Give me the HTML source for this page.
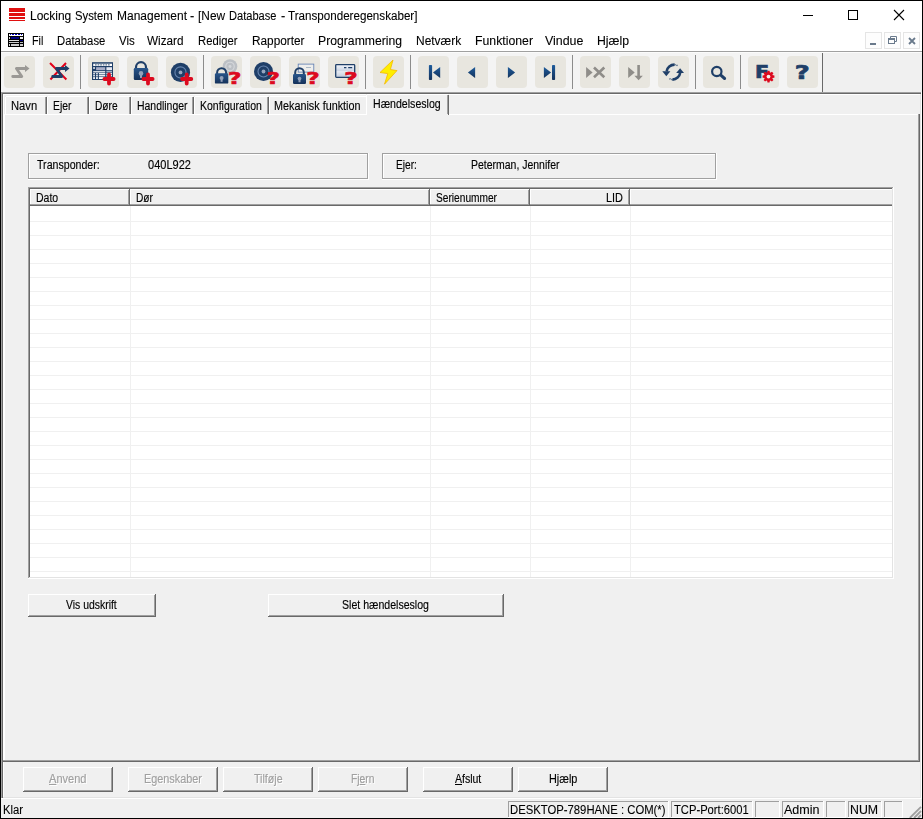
<!DOCTYPE html>
<html lang="da"><head><meta charset="utf-8"><title>Locking System Management</title>
<style>
html,body{margin:0;padding:0;}
body{width:923px;height:819px;overflow:hidden;background:#fff;position:relative;font-family:"Liberation Sans", sans-serif;}
#w{position:absolute;left:0;top:0;width:923px;height:819px;overflow:hidden;background:#fff;}
#w div{position:absolute;}
#w .g{left:0;top:0;width:0;height:0;}
#w svg{position:absolute;overflow:visible;}
.t{position:absolute;white-space:pre;transform-origin:0 0;color:#000;}
.f12{font-size:12px;line-height:16px;-webkit-text-stroke:0.1px;}
.f12_5{font-size:12.5px;line-height:16px;-webkit-text-stroke:0.15px;}
.t u{text-decoration:underline;text-underline-offset:1px;}
</style></head>
<body><div id="w">
<div class="g" id="titlebar">
<div style="left:0px;top:0px;width:923px;height:819px;background:#fff;"></div>
<div style="left:9px;top:8px;width:16px;height:4px;background:#e01010;"></div>
<div style="left:9px;top:13px;width:16px;height:3px;background:#e01010;"></div>
<div style="left:9px;top:17px;width:16px;height:2px;background:#e01010;"></div>
<div style="left:9px;top:20px;width:16px;height:1px;background:#e01010;"></div>
<span class="t f12" style="left:30.06px;top:8.33px;transform:scaleX(0.9978);">Locking </span>
<span class="t f12" style="left:75.19px;top:8.33px;transform:scaleX(0.9402);">System </span>
<span class="t f12" style="left:116.76px;top:8.33px;transform:scaleX(0.9989);">Management </span>
<span class="t f12" style="left:190.23px;top:8.33px;transform:scaleX(1.0588);">- </span>
<span class="t f12" style="left:198.37px;top:8.33px;transform:scaleX(0.9897);">[New </span>
<span class="t f12" style="left:229.40px;top:8.33px;transform:scaleX(0.9227);">Database </span>
<span class="t f12" style="left:280.73px;top:8.33px;transform:scaleX(1.0588);">- </span>
<span class="t f12" style="left:288.48px;top:8.33px;transform:scaleX(0.9686);">Transponderegenskaber]</span>
<div style="left:803px;top:15px;width:10px;height:1px;background:#000;"></div>
<div style="left:848px;top:10px;width:8px;height:8px;border:1px solid #000;"></div>
<svg style="left:893px;top:9px" width="12" height="12" viewBox="0 0 12 12"><path d="M1 1 L11 11 M11 1 L1 11" stroke="#000" stroke-width="1.1" fill="none"/></svg>
</div>
<div class="g" id="menubar">
<svg style="left:8px;top:33px" width="16" height="14" viewBox="0 0 16 14"><rect x="0" y="0" width="16" height="14" fill="#000"/><rect x="1" y="1" width="14" height="2" fill="#fff"/><path d="M2 1h1v1h-1zM4 1h2v1h-2zM7 1h2v1h-2zM10 1h2v1h-2zM13 1h1v1h-1z" fill="#0000c0"/><rect x="1" y="4" width="1" height="2" fill="#ddd"/><rect x="3" y="4" width="8" height="2" fill="#000080"/><rect x="12" y="4" width="3" height="2" fill="#eee"/><rect x="1" y="7" width="10" height="1" fill="#ddd"/><rect x="12" y="7" width="3" height="1" fill="#000080"/><rect x="1" y="9" width="10" height="1" fill="#ccc"/><rect x="12" y="9" width="3" height="1" fill="#bbb"/><rect x="1" y="11" width="1" height="2" fill="#ddd"/><rect x="3" y="11" width="8" height="2" fill="#ccc"/><rect x="12" y="11" width="3" height="2" fill="#ccc"/></svg>
<span class="t f12" style="left:31.52px;top:33.23px;transform:scaleX(0.8972);">Fil</span>
<span class="t f12" style="left:56.89px;top:33.23px;transform:scaleX(0.9405);">Database</span>
<span class="t f12" style="left:118.68px;top:33.23px;transform:scaleX(0.9562);">Vis</span>
<span class="t f12" style="left:147.27px;top:33.23px;transform:scaleX(0.9762);">Wizard</span>
<span class="t f12" style="left:198.39px;top:33.23px;transform:scaleX(0.9377);">Rediger</span>
<span class="t f12" style="left:251.97px;top:33.23px;transform:scaleX(0.9848);">Rapporter</span>
<span class="t f12" style="left:317.95px;top:33.23px;transform:scaleX(1.0169);">Programmering</span>
<span class="t f12" style="left:416.36px;top:33.23px;transform:scaleX(0.9963);">Netværk</span>
<span class="t f12" style="left:474.85px;top:33.23px;transform:scaleX(1.0230);">Funktioner</span>
<span class="t f12" style="left:545.44px;top:33.23px;transform:scaleX(1.0339);">Vindue</span>
<span class="t f12" style="left:597.25px;top:33.23px;transform:scaleX(1.0210);">Hjælp</span>
<div style="left:865px;top:32px;width:17px;height:17px;border:1px solid #e5e5e5;box-sizing:border-box;background:#fdfdfd"></div>
<div style="left:884px;top:32px;width:17px;height:17px;border:1px solid #e5e5e5;box-sizing:border-box;background:#fdfdfd"></div>
<div style="left:903px;top:32px;width:17px;height:17px;border:1px solid #e5e5e5;box-sizing:border-box;background:#fdfdfd"></div>
<div style="left:870px;top:43px;width:6px;height:2px;background:#6a7a8c;"></div>
<svg style="left:888px;top:36px" width="9" height="9" viewBox="0 0 9 9"><path d="M2.5 2.5V0.5H8.5V5.5H6.5" stroke="#6a7a8c" fill="none"/><rect x="0.5" y="2.5" width="6" height="5" stroke="#6a7a8c" fill="#fdfdfd"/><path d="M0.5 3.5H6.5" stroke="#6a7a8c"/></svg>
<svg style="left:908px;top:37px" width="8" height="8" viewBox="0 0 8 8"><path d="M1 1L7 7M7 1L1 7" stroke="#6a7a8c" stroke-width="1.8" fill="none"/></svg>
<div style="left:1px;top:51px;width:921px;height:1px;background:#a0a0a0;"></div>
</div>
<div class="g" id="toolbar">
<div style="left:1px;top:52px;width:921px;height:40px;background:#f0f0f0;"></div>
<div style="left:1px;top:52px;width:821px;height:40px;background:#f4f4f4;"></div>
<div style="left:1px;top:52px;width:921px;height:1px;background:#fbfbfb;"></div>
<div style="left:3.5px;top:56px;width:31.5px;height:32px;background:#e8e6df;border-radius:4px"></div>
<div style="left:42.5px;top:56px;width:31.5px;height:32px;background:#e8e6df;border-radius:4px"></div>
<div style="left:87.5px;top:56px;width:31.5px;height:32px;background:#e8e6df;border-radius:4px"></div>
<div style="left:126.5px;top:56px;width:31.5px;height:32px;background:#e8e6df;border-radius:4px"></div>
<div style="left:165.5px;top:56px;width:31.5px;height:32px;background:#e8e6df;border-radius:4px"></div>
<div style="left:210.5px;top:56px;width:31.5px;height:32px;background:#e8e6df;border-radius:4px"></div>
<div style="left:249.5px;top:56px;width:31.5px;height:32px;background:#e8e6df;border-radius:4px"></div>
<div style="left:288.5px;top:56px;width:31.5px;height:32px;background:#e8e6df;border-radius:4px"></div>
<div style="left:327.5px;top:56px;width:31.5px;height:32px;background:#e8e6df;border-radius:4px"></div>
<div style="left:372.5px;top:56px;width:31.5px;height:32px;background:#e8e6df;border-radius:4px"></div>
<div style="left:417.5px;top:56px;width:31.5px;height:32px;background:#e8e6df;border-radius:4px"></div>
<div style="left:456.5px;top:56px;width:31.5px;height:32px;background:#e8e6df;border-radius:4px"></div>
<div style="left:495.5px;top:56px;width:31.5px;height:32px;background:#e8e6df;border-radius:4px"></div>
<div style="left:534.5px;top:56px;width:31.5px;height:32px;background:#e8e6df;border-radius:4px"></div>
<div style="left:579.5px;top:56px;width:31.5px;height:32px;background:#e8e6df;border-radius:4px"></div>
<div style="left:618.5px;top:56px;width:31.5px;height:32px;background:#e8e6df;border-radius:4px"></div>
<div style="left:657.5px;top:56px;width:31.5px;height:32px;background:#e8e6df;border-radius:4px"></div>
<div style="left:702.5px;top:56px;width:31.5px;height:32px;background:#e8e6df;border-radius:4px"></div>
<div style="left:747.5px;top:56px;width:31.5px;height:32px;background:#e8e6df;border-radius:4px"></div>
<div style="left:786.5px;top:56px;width:31.5px;height:32px;background:#e8e6df;border-radius:4px"></div>
<div style="left:80px;top:55px;width:1px;height:34px;background:#8c8c8c;"></div>
<div style="left:203px;top:55px;width:1px;height:34px;background:#8c8c8c;"></div>
<div style="left:365px;top:55px;width:1px;height:34px;background:#8c8c8c;"></div>
<div style="left:410px;top:55px;width:1px;height:34px;background:#8c8c8c;"></div>
<div style="left:572px;top:55px;width:1px;height:34px;background:#8c8c8c;"></div>
<div style="left:695px;top:55px;width:1px;height:34px;background:#8c8c8c;"></div>
<div style="left:740px;top:55px;width:1px;height:34px;background:#8c8c8c;"></div>
<div style="left:822px;top:53px;width:1px;height:39px;background:#696969;"></div>
<svg style="left:3px;top:56px" width="32" height="32" viewBox="0 0 32 32"><defs><linearGradient id="lg" x1="0" y1="0" x2="0" y2="1"><stop offset="0" stop-color="#28558a"/><stop offset="1" stop-color="#15325a"/></linearGradient></defs><path d="M9.7 20.5H18.8L13.4 12.5H23" stroke="#9b9995" stroke-width="2.8" fill="none" stroke-linecap="round" stroke-linejoin="round"/><path d="M22 9L26.5 12.5L22 16Z" fill="#9b9995"/></svg>
<svg style="left:43.3px;top:56px" width="32" height="32" viewBox="0 0 32 32"><path d="M7 7L23.4 23.5M23 7L7.4 23.5" stroke="#e2001a" stroke-width="2" fill="none"/><path d="M9.7 20.5H18.8L13.4 12.5H23" stroke="#1f3f68" stroke-width="2.8" fill="none" stroke-linecap="round" stroke-linejoin="round"/><path d="M22 9L26.5 12.5L22 16Z" fill="#1f3f68"/></svg>
<svg style="left:87px;top:56px" width="32" height="32" viewBox="0 0 32 32"><rect x="5" y="6.2" width="21" height="17.8" fill="#1f3f68"/><rect x="6.2" y="7.7" width="18.8" height="2.3" fill="#fff"/><path d="M8 8.9h15.4" stroke="#1f3f68" stroke-width="0.9" stroke-dasharray="1.7 0.9"/><rect x="6.2" y="11.2" width="1.7" height="1.6" fill="#fff"/><rect x="9.1" y="11.2" width="9.1" height="3" fill="#a9aec8"/><rect x="19.4" y="11.2" width="5.6" height="3" fill="#e4e6f0"/><rect x="6.2" y="15.2" width="12" height="1.2" fill="#fff"/><rect x="19.4" y="15.2" width="5.6" height="1.2" fill="#c8ccdc"/><rect x="6.2" y="17.1" width="1.7" height="1.3" fill="#fff"/><rect x="9.1" y="17.1" width="1.7" height="1.3" fill="#fff"/><rect x="11.9" y="17.1" width="6.3" height="1.3" fill="#fff"/><rect x="19.4" y="17.1" width="5.6" height="1.3" fill="#fff"/><rect x="6.2" y="19.1" width="1.7" height="1.3" fill="#fff"/><rect x="9.1" y="19.1" width="1.7" height="1.3" fill="#fff"/><rect x="11.9" y="19.1" width="6.3" height="1.3" fill="#fff"/><rect x="19.4" y="19.1" width="5.6" height="1.3" fill="#fff"/><rect x="6.2" y="21.1" width="1.7" height="1.9" fill="#fff"/><rect x="9.1" y="21.1" width="1.7" height="1.9" fill="#fff"/><rect x="11.9" y="21.1" width="6.3" height="1.9" fill="#fff"/><rect x="19.4" y="21.1" width="5.6" height="1.9" fill="#fff"/><path d="M17.4 23H26.6M22 18.4V27.6" stroke="#dc0a1e" stroke-width="3.8" stroke-linecap="round" fill="none"/></svg>
<svg style="left:126px;top:56px" width="32" height="32" viewBox="0 0 32 32"><path d="M10.0 13V11.2A5.0 5.0 0 0 1 20.0 11.2V13" stroke="#1f3f68" stroke-width="2.2" fill="none"/><rect x="7.8" y="12" width="14.4" height="12" rx="1.2" fill="url(#lg)"/><circle cx="15.0" cy="17.4" r="2.2800000000000002" fill="#93a1b9"/><rect x="14.0" y="17.4" width="2" height="4.5600000000000005" fill="#93a1b9"/><path d="M17.4 23H26.6M22 18.4V27.6" stroke="#dc0a1e" stroke-width="3.8" stroke-linecap="round" fill="none"/></svg>
<svg style="left:165px;top:56px" width="32" height="32" viewBox="0 0 32 32"><circle cx="15.5" cy="16.4" r="9.6" fill="#1f3f68"/><circle cx="15.5" cy="16.4" r="5.568" fill="none" stroke="#6886b0" stroke-width="1.1"/><circle cx="15.5" cy="16.4" r="1.92" fill="#97a6bf"/><path d="M17.1 23H26.299999999999997M21.7 18.4V27.6" stroke="#dc0a1e" stroke-width="3.8" stroke-linecap="round" fill="none"/></svg>
<svg style="left:210px;top:56px" width="32" height="32" viewBox="0 0 32 32"><circle cx="20" cy="10.5" r="7.3" fill="#bcc0c5"/><circle cx="20" cy="10.5" r="4.234" fill="none" stroke="#d6d8dc" stroke-width="1.1"/><circle cx="20" cy="10.5" r="1.46" fill="#d6d8dc"/><path d="M7.100000000000001 18.2V16.7A4.5 4.5 0 0 1 16.1 16.7V18.2" stroke="#1f3f68" stroke-width="2.0" fill="none"/><rect x="4.9" y="17.2" width="13.4" height="10.4" rx="1.2" fill="url(#lg)"/><circle cx="11.600000000000001" cy="21.88" r="1.9760000000000002" fill="#93a1b9"/><rect x="10.600000000000001" y="21.88" width="2" height="3.9520000000000004" fill="#93a1b9"/><text x="0" y="0" transform="translate(17.9 27.7) scale(1.42 1)" font-family="DejaVu Sans, Liberation Sans, sans-serif" font-weight="bold" font-size="16.3" fill="#dc0a1e" stroke="#dc0a1e" stroke-width="0.6" stroke-linejoin="round">?</text></svg>
<svg style="left:249px;top:56px" width="32" height="32" viewBox="0 0 32 32"><circle cx="14.5" cy="15.5" r="9.5" fill="#1f3f68"/><circle cx="14.5" cy="15.5" r="5.51" fill="none" stroke="#6886b0" stroke-width="1.1"/><circle cx="14.5" cy="15.5" r="1.9000000000000001" fill="#97a6bf"/><text x="0" y="0" transform="translate(17.5 27.7) scale(1.42 1)" font-family="DejaVu Sans, Liberation Sans, sans-serif" font-weight="bold" font-size="16.3" fill="#dc0a1e" stroke="#dc0a1e" stroke-width="0.6" stroke-linejoin="round">?</text></svg>
<svg style="left:288px;top:56px" width="32" height="32" viewBox="0 0 32 32"><rect x="10.2" y="8.1" width="15.6" height="8" fill="#eeeeec" stroke="#5a7bb0" stroke-width="0.8"/><path d="M18 11.5h5" stroke="#9ab" stroke-width="0.8"/><path d="M7.2 19.1V16.5A4.3 4.3 0 0 1 15.8 16.5V19.1" stroke="#1f3f68" stroke-width="2.0" fill="none"/><rect x="5" y="18.1" width="13" height="9.8" rx="1.2" fill="url(#lg)"/><circle cx="11.5" cy="22.51" r="1.862" fill="#93a1b9"/><rect x="10.5" y="22.51" width="2" height="3.724" fill="#93a1b9"/><text x="0" y="0" transform="translate(18.3 27.7) scale(1.42 1)" font-family="DejaVu Sans, Liberation Sans, sans-serif" font-weight="bold" font-size="16.3" fill="#dc0a1e" stroke="#dc0a1e" stroke-width="0.6" stroke-linejoin="round">?</text></svg>
<svg style="left:327px;top:56px" width="32" height="32" viewBox="0 0 32 32"><defs><linearGradient id="cg" x1="0" y1="0" x2="0" y2="1"><stop offset="0" stop-color="#f4f6fa"/><stop offset="0.45" stop-color="#cdd6e4"/><stop offset="0.55" stop-color="#e4e9f1"/><stop offset="1" stop-color="#c3cddd"/></linearGradient></defs><rect x="8.7" y="8.7" width="19" height="12.6" rx="0.8" fill="url(#cg)" stroke="#1f3f68" stroke-width="1.3"/><path d="M17 11.7h2.4M21.2 11.7h4" stroke="#1f3f68" stroke-width="1.3"/><text x="0" y="0" transform="translate(17.3 27.7) scale(1.42 1)" font-family="DejaVu Sans, Liberation Sans, sans-serif" font-weight="bold" font-size="16.3" fill="#dc0a1e" stroke="#dc0a1e" stroke-width="0.6" stroke-linejoin="round">?</text></svg>
<svg style="left:372px;top:56px" width="32" height="32" viewBox="0 0 32 32"><path d="M21 4L8 16.5L15.8 17.6L12.5 28.2L25 14.6L18.4 13.5Z" fill="#ffee00" stroke="#f5b800" stroke-width="0.8" stroke-linejoin="round"/></svg>
<svg style="left:417px;top:56px" width="32" height="32" viewBox="0 0 32 32"><defs><linearGradient id="ng" x1="0" y1="0" x2="0" y2="1"><stop offset="0" stop-color="#1f5c9c"/><stop offset="1" stop-color="#14335c"/></linearGradient></defs><rect x="11.9" y="9" width="3.2" height="15" rx="0.8" fill="url(#ng)"/><path d="M16 16.5L23.2 10.9V22.1Z" fill="url(#ng)"/></svg>
<svg style="left:456px;top:56px" width="32" height="32" viewBox="0 0 32 32"><path d="M11.9 16.5L19.1 10.9V22.1Z" fill="url(#ng)"/></svg>
<svg style="left:495px;top:56px" width="32" height="32" viewBox="0 0 32 32"><path d="M20.1 16.5L12.9 10.9V22.1Z" fill="url(#ng)"/></svg>
<svg style="left:534px;top:56px" width="32" height="32" viewBox="0 0 32 32"><path d="M17.1 16.5L9.9 10.9V22.1Z" fill="url(#ng)"/><rect x="18" y="9" width="3.1" height="15" rx="0.8" fill="url(#ng)"/></svg>
<svg style="left:579px;top:56px" width="32" height="32" viewBox="0 0 32 32"><path d="M13.6 16.4L7.1 10.9V21.9Z" fill="#8f8d89"/><path d="M15 11.5L25.3 21.3M25.3 11.5L15 21.3" stroke="#8f8d89" stroke-width="2.6" fill="none"/></svg>
<svg style="left:618px;top:56px" width="32" height="32" viewBox="0 0 32 32"><path d="M16.7 16.4L10.2 10.9V21.9Z" fill="#8f8d89"/><path d="M20.6 9V21" stroke="#8f8d89" stroke-width="2.6" fill="none"/><path d="M16.4 19.8H24.8L20.6 24.2Z" fill="#8f8d89"/></svg>
<svg style="left:657px;top:56px" width="32" height="32" viewBox="0 0 32 32"><path d="M17.6 8.6A8 8 0 0 0 9.6 15.5" stroke="#1f3f68" stroke-width="2.6" fill="none"/><path d="M5.3 15.2H13.4L9.3 20.2Z" fill="#1f3f68"/><path d="M15.4 23.6A8 8 0 0 0 23.2 16.6" stroke="#1f3f68" stroke-width="2.6" fill="none"/><path d="M19.2 16.9H27L23.1 12.2Z" fill="#1f3f68"/><path d="M17.6 8.6A8 8 0 0 1 20.5 9.6" stroke="#1f3f68" stroke-width="1.4" stroke-dasharray="1 1" fill="none"/><path d="M15.4 23.6A8 8 0 0 1 12.2 22.4" stroke="#1f3f68" stroke-width="1.4" stroke-dasharray="1 1" fill="none"/></svg>
<svg style="left:702px;top:56px" width="32" height="32" viewBox="0 0 32 32"><circle cx="14.8" cy="15.5" r="4.7" fill="none" stroke="#1f3f68" stroke-width="2.2"/><path d="M18.8 19.2L22.6 22.5" stroke="#1f3f68" stroke-width="3" stroke-linecap="round"/></svg>
<svg style="left:747px;top:56px" width="32" height="32" viewBox="0 0 32 32"><text transform="translate(8.1 21.9) scale(1.16 1)" font-family="DejaVu Sans, Liberation Sans, sans-serif" font-weight="bold" font-size="17.8" fill="#1f3f68" stroke="#1f3f68" stroke-width="0.7">F</text><g transform="translate(21.5 20.6)" fill="#dc0a1e"><path d="M-1.5 -3.5L-1.05 -5.9H1.05L1.5 -3.5Z" transform="rotate(0)" /><path d="M-1.5 -3.5L-1.05 -5.9H1.05L1.5 -3.5Z" transform="rotate(45)" /><path d="M-1.5 -3.5L-1.05 -5.9H1.05L1.5 -3.5Z" transform="rotate(90)" /><path d="M-1.5 -3.5L-1.05 -5.9H1.05L1.5 -3.5Z" transform="rotate(135)" /><path d="M-1.5 -3.5L-1.05 -5.9H1.05L1.5 -3.5Z" transform="rotate(180)" /><path d="M-1.5 -3.5L-1.05 -5.9H1.05L1.5 -3.5Z" transform="rotate(225)" /><path d="M-1.5 -3.5L-1.05 -5.9H1.05L1.5 -3.5Z" transform="rotate(270)" /><path d="M-1.5 -3.5L-1.05 -5.9H1.05L1.5 -3.5Z" transform="rotate(315)" /><circle r="4.1"/><circle r="1.9" fill="#f3efea"/></g></svg>
<svg style="left:786px;top:56px" width="32" height="32" viewBox="0 0 32 32"><text x="0" y="0" transform="translate(8.7 22.8) scale(1.36 1)" font-family="DejaVu Sans, Liberation Sans, sans-serif" font-weight="bold" font-size="19" fill="#1f3f68" stroke="#1f3f68" stroke-width="0.7" stroke-linejoin="round">?</text></svg>
</div>
<div class="g" id="client">
<div style="left:1px;top:92px;width:920px;height:1px;background:#a0a0a0;"></div>
<div style="left:1px;top:93px;width:920px;height:1px;background:#696969;"></div>
<div style="left:1px;top:92px;width:1px;height:707px;background:#a0a0a0;"></div>
<div style="left:2px;top:93px;width:1px;height:705px;background:#696969;"></div>
<div style="left:3px;top:94px;width:917px;height:703px;background:#f0f0f0;"></div>
<div style="left:920px;top:94px;width:1px;height:704px;background:#e3e3e3;"></div>
<div style="left:921px;top:92px;width:1px;height:707px;background:#ffffff;"></div>
<div style="left:3px;top:797px;width:918px;height:1px;background:#e3e3e3;"></div>
<div style="left:1px;top:798px;width:921px;height:1px;background:#ffffff;"></div>
<div style="left:3px;top:94px;width:917px;height:1px;background:#ffffff;"></div>
<div style="left:3px;top:94px;width:1px;height:703px;background:#ffffff;"></div>
</div>
<div class="g" id="tabs">
<div style="left:4px;top:114px;width:915px;height:1px;background:#ffffff;"></div>
<div style="left:4px;top:114px;width:1px;height:647px;background:#ffffff;"></div>
<div style="left:918px;top:114px;width:1px;height:647px;background:#a0a0a0;"></div>
<div style="left:919px;top:114px;width:1px;height:648px;background:#696969;"></div>
<div style="left:3px;top:760px;width:916px;height:1px;background:#a0a0a0;"></div>
<div style="left:3px;top:761px;width:917px;height:1px;background:#696969;"></div>
<div style="left:6px;top:96px;width:40px;height:1px;background:#ffffff;"></div>
<div style="left:5px;top:97px;width:1px;height:17px;background:#ffffff;"></div>
<div style="left:45px;top:97px;width:1px;height:17px;background:#a0a0a0;"></div>
<div style="left:46px;top:97px;width:1px;height:17px;background:#696969;"></div>
<span class="t f12_5" style="left:10.69px;top:97.87px;transform:scaleX(0.8980);">Navn</span>
<div style="left:48px;top:96px;width:40px;height:1px;background:#ffffff;"></div>
<div style="left:47px;top:97px;width:1px;height:17px;background:#ffffff;"></div>
<div style="left:87px;top:97px;width:1px;height:17px;background:#a0a0a0;"></div>
<div style="left:88px;top:97px;width:1px;height:17px;background:#696969;"></div>
<span class="t f12_5" style="left:52.53px;top:97.87px;transform:scaleX(0.8290);">Ejer</span>
<div style="left:90px;top:96px;width:40px;height:1px;background:#ffffff;"></div>
<div style="left:89px;top:97px;width:1px;height:17px;background:#ffffff;"></div>
<div style="left:129px;top:97px;width:1px;height:17px;background:#a0a0a0;"></div>
<div style="left:130px;top:97px;width:1px;height:17px;background:#696969;"></div>
<span class="t f12_5" style="left:94.94px;top:97.87px;transform:scaleX(0.8141);">Døre</span>
<div style="left:132px;top:96px;width:61px;height:1px;background:#ffffff;"></div>
<div style="left:131px;top:97px;width:1px;height:17px;background:#ffffff;"></div>
<div style="left:192px;top:97px;width:1px;height:17px;background:#a0a0a0;"></div>
<div style="left:193px;top:97px;width:1px;height:17px;background:#696969;"></div>
<span class="t f12_5" style="left:137.33px;top:97.87px;transform:scaleX(0.8358);">Handlinger</span>
<div style="left:195px;top:96px;width:73px;height:1px;background:#ffffff;"></div>
<div style="left:194px;top:97px;width:1px;height:17px;background:#ffffff;"></div>
<div style="left:267px;top:97px;width:1px;height:17px;background:#a0a0a0;"></div>
<div style="left:268px;top:97px;width:1px;height:17px;background:#696969;"></div>
<span class="t f12_5" style="left:199.73px;top:97.87px;transform:scaleX(0.8395);">Konfiguration</span>
<div style="left:270px;top:96px;width:96px;height:1px;background:#ffffff;"></div>
<div style="left:269px;top:97px;width:1px;height:17px;background:#ffffff;"></div>
<span class="t f12_5" style="left:274.31px;top:97.87px;transform:scaleX(0.8642);">Mekanisk funktion</span>
<div style="left:366px;top:94px;width:83px;height:21px;background:#f0f0f0;"></div>
<div style="left:367px;top:94px;width:81px;height:1px;background:#ffffff;"></div>
<div style="left:366px;top:95px;width:1px;height:20px;background:#ffffff;"></div>
<div style="left:447px;top:95px;width:1px;height:19px;background:#a0a0a0;"></div>
<div style="left:448px;top:95px;width:1px;height:20px;background:#696969;"></div>
<span class="t f12_5" style="left:372.92px;top:95.87px;transform:scaleX(0.8477);">Hændelseslog</span>
</div>
<div class="g" id="fields">
<div style="left:28px;top:153px;width:338px;height:24px;border:1px solid #a0a0a0;"></div>
<div style="left:368px;top:153px;width:1px;height:27px;background:#ffffff;"></div>
<div style="left:28px;top:179px;width:340px;height:1px;background:#ffffff;"></div>
<div style="left:29px;top:154px;width:338px;height:1px;background:#ffffff;"></div>
<div style="left:29px;top:154px;width:1px;height:24px;background:#ffffff;"></div>
<div style="left:382px;top:153px;width:332px;height:24px;border:1px solid #a0a0a0;"></div>
<div style="left:716px;top:153px;width:1px;height:27px;background:#ffffff;"></div>
<div style="left:382px;top:179px;width:334px;height:1px;background:#ffffff;"></div>
<div style="left:383px;top:154px;width:332px;height:1px;background:#ffffff;"></div>
<div style="left:383px;top:154px;width:1px;height:24px;background:#ffffff;"></div>
<span class="t f12_5" style="left:36.92px;top:156.87px;transform:scaleX(0.8493);">Transponder:</span>
<span class="t f12_5" style="left:147.80px;top:156.87px;transform:scaleX(0.8812);">040L922</span>
<span class="t f12_5" style="left:396.14px;top:156.87px;transform:scaleX(0.8137);">Ejer:</span>
<span class="t f12_5" style="left:470.93px;top:156.87px;transform:scaleX(0.8374);">Peterman, Jennifer</span>
</div>
<div class="g" id="listview">
<div style="left:28px;top:187px;width:866px;height:392px;background:#ffffff;"></div>
<div style="left:28px;top:187px;width:865px;height:1px;background:#a0a0a0;"></div>
<div style="left:28px;top:187px;width:1px;height:391px;background:#a0a0a0;"></div>
<div style="left:29px;top:188px;width:863px;height:1px;background:#696969;"></div>
<div style="left:29px;top:188px;width:1px;height:389px;background:#696969;"></div>
<div style="left:29px;top:577px;width:864px;height:1px;background:#e3e3e3;"></div>
<div style="left:892px;top:188px;width:1px;height:390px;background:#e3e3e3;"></div>
<div style="left:30px;top:189px;width:862px;height:15px;background:#f0f0f0;"></div>
<div style="left:30px;top:189px;width:862px;height:1px;background:#ffffff;"></div>
<div style="left:30px;top:189px;width:1px;height:15px;background:#ffffff;"></div>
<div style="left:30px;top:204px;width:862px;height:1px;background:#a0a0a0;"></div>
<div style="left:30px;top:205px;width:862px;height:1px;background:#696969;"></div>
<div style="left:128px;top:190px;width:1px;height:14px;background:#a0a0a0;"></div>
<div style="left:129px;top:189px;width:1px;height:16px;background:#696969;"></div>
<div style="left:130px;top:189px;width:1px;height:15px;background:#ffffff;"></div>
<div style="left:428px;top:190px;width:1px;height:14px;background:#a0a0a0;"></div>
<div style="left:429px;top:189px;width:1px;height:16px;background:#696969;"></div>
<div style="left:430px;top:189px;width:1px;height:15px;background:#ffffff;"></div>
<div style="left:528px;top:190px;width:1px;height:14px;background:#a0a0a0;"></div>
<div style="left:529px;top:189px;width:1px;height:16px;background:#696969;"></div>
<div style="left:530px;top:189px;width:1px;height:15px;background:#ffffff;"></div>
<div style="left:628px;top:190px;width:1px;height:14px;background:#a0a0a0;"></div>
<div style="left:629px;top:189px;width:1px;height:16px;background:#696969;"></div>
<div style="left:630px;top:189px;width:1px;height:15px;background:#ffffff;"></div>
<span class="t f12_5" style="left:36.23px;top:189.87px;transform:scaleX(0.8386);">Dato</span>
<span class="t f12_5" style="left:136.14px;top:189.87px;transform:scaleX(0.8121);">Dør</span>
<span class="t f12_5" style="left:436.04px;top:189.87px;transform:scaleX(0.8132);">Serienummer</span>
<span class="t f12_5" style="left:606.41px;top:189.87px;transform:scaleX(0.8730);">LID</span>
<div style="left:30px;top:221px;width:862px;height:1px;background:#f0f0f0;"></div>
<div style="left:30px;top:235px;width:862px;height:1px;background:#f0f0f0;"></div>
<div style="left:30px;top:249px;width:862px;height:1px;background:#f0f0f0;"></div>
<div style="left:30px;top:263px;width:862px;height:1px;background:#f0f0f0;"></div>
<div style="left:30px;top:277px;width:862px;height:1px;background:#f0f0f0;"></div>
<div style="left:30px;top:291px;width:862px;height:1px;background:#f0f0f0;"></div>
<div style="left:30px;top:305px;width:862px;height:1px;background:#f0f0f0;"></div>
<div style="left:30px;top:319px;width:862px;height:1px;background:#f0f0f0;"></div>
<div style="left:30px;top:333px;width:862px;height:1px;background:#f0f0f0;"></div>
<div style="left:30px;top:347px;width:862px;height:1px;background:#f0f0f0;"></div>
<div style="left:30px;top:361px;width:862px;height:1px;background:#f0f0f0;"></div>
<div style="left:30px;top:375px;width:862px;height:1px;background:#f0f0f0;"></div>
<div style="left:30px;top:389px;width:862px;height:1px;background:#f0f0f0;"></div>
<div style="left:30px;top:403px;width:862px;height:1px;background:#f0f0f0;"></div>
<div style="left:30px;top:417px;width:862px;height:1px;background:#f0f0f0;"></div>
<div style="left:30px;top:431px;width:862px;height:1px;background:#f0f0f0;"></div>
<div style="left:30px;top:445px;width:862px;height:1px;background:#f0f0f0;"></div>
<div style="left:30px;top:459px;width:862px;height:1px;background:#f0f0f0;"></div>
<div style="left:30px;top:473px;width:862px;height:1px;background:#f0f0f0;"></div>
<div style="left:30px;top:487px;width:862px;height:1px;background:#f0f0f0;"></div>
<div style="left:30px;top:501px;width:862px;height:1px;background:#f0f0f0;"></div>
<div style="left:30px;top:515px;width:862px;height:1px;background:#f0f0f0;"></div>
<div style="left:30px;top:529px;width:862px;height:1px;background:#f0f0f0;"></div>
<div style="left:30px;top:543px;width:862px;height:1px;background:#f0f0f0;"></div>
<div style="left:30px;top:557px;width:862px;height:1px;background:#f0f0f0;"></div>
<div style="left:30px;top:571px;width:862px;height:1px;background:#f0f0f0;"></div>
<div style="left:130px;top:206px;width:1px;height:371px;background:#f0f0f0;"></div>
<div style="left:430px;top:206px;width:1px;height:371px;background:#f0f0f0;"></div>
<div style="left:530px;top:206px;width:1px;height:371px;background:#f0f0f0;"></div>
<div style="left:630px;top:206px;width:1px;height:371px;background:#f0f0f0;"></div>
</div>
<div class="g" id="buttons">
<div style="left:28px;top:594px;width:128px;height:23px;background:#f0f0f0;"></div>
<div style="left:28px;top:594px;width:127px;height:1px;background:#ffffff;"></div>
<div style="left:28px;top:594px;width:1px;height:22px;background:#ffffff;"></div>
<div style="left:29px;top:615px;width:126px;height:1px;background:#a0a0a0;"></div>
<div style="left:154px;top:595px;width:1px;height:21px;background:#a0a0a0;"></div>
<div style="left:28px;top:616px;width:128px;height:1px;background:#696969;"></div>
<div style="left:155px;top:594px;width:1px;height:23px;background:#696969;"></div>
<span class="t f12_5" style="left:65.63px;top:596.87px;transform:scaleX(0.8330);">Vis udskrift</span>
<div style="left:268px;top:594px;width:236px;height:23px;background:#f0f0f0;"></div>
<div style="left:268px;top:594px;width:235px;height:1px;background:#ffffff;"></div>
<div style="left:268px;top:594px;width:1px;height:22px;background:#ffffff;"></div>
<div style="left:269px;top:615px;width:234px;height:1px;background:#a0a0a0;"></div>
<div style="left:502px;top:595px;width:1px;height:21px;background:#a0a0a0;"></div>
<div style="left:268px;top:616px;width:236px;height:1px;background:#696969;"></div>
<div style="left:503px;top:594px;width:1px;height:23px;background:#696969;"></div>
<span class="t f12_5" style="left:342.02px;top:596.87px;transform:scaleX(0.8453);">Slet hændelseslog</span>
<div style="left:23px;top:767px;width:90px;height:25px;background:#f0f0f0;"></div>
<div style="left:23px;top:767px;width:89px;height:1px;background:#ffffff;"></div>
<div style="left:23px;top:767px;width:1px;height:24px;background:#ffffff;"></div>
<div style="left:24px;top:790px;width:88px;height:1px;background:#a0a0a0;"></div>
<div style="left:111px;top:768px;width:1px;height:23px;background:#a0a0a0;"></div>
<div style="left:23px;top:791px;width:90px;height:1px;background:#696969;"></div>
<div style="left:112px;top:767px;width:1px;height:25px;background:#696969;"></div>
<div style="left:128px;top:767px;width:90px;height:25px;background:#f0f0f0;"></div>
<div style="left:128px;top:767px;width:89px;height:1px;background:#ffffff;"></div>
<div style="left:128px;top:767px;width:1px;height:24px;background:#ffffff;"></div>
<div style="left:129px;top:790px;width:88px;height:1px;background:#a0a0a0;"></div>
<div style="left:216px;top:768px;width:1px;height:23px;background:#a0a0a0;"></div>
<div style="left:128px;top:791px;width:90px;height:1px;background:#696969;"></div>
<div style="left:217px;top:767px;width:1px;height:25px;background:#696969;"></div>
<div style="left:223px;top:767px;width:90px;height:25px;background:#f0f0f0;"></div>
<div style="left:223px;top:767px;width:89px;height:1px;background:#ffffff;"></div>
<div style="left:223px;top:767px;width:1px;height:24px;background:#ffffff;"></div>
<div style="left:224px;top:790px;width:88px;height:1px;background:#a0a0a0;"></div>
<div style="left:311px;top:768px;width:1px;height:23px;background:#a0a0a0;"></div>
<div style="left:223px;top:791px;width:90px;height:1px;background:#696969;"></div>
<div style="left:312px;top:767px;width:1px;height:25px;background:#696969;"></div>
<div style="left:318px;top:767px;width:90px;height:25px;background:#f0f0f0;"></div>
<div style="left:318px;top:767px;width:89px;height:1px;background:#ffffff;"></div>
<div style="left:318px;top:767px;width:1px;height:24px;background:#ffffff;"></div>
<div style="left:319px;top:790px;width:88px;height:1px;background:#a0a0a0;"></div>
<div style="left:406px;top:768px;width:1px;height:23px;background:#a0a0a0;"></div>
<div style="left:318px;top:791px;width:90px;height:1px;background:#696969;"></div>
<div style="left:407px;top:767px;width:1px;height:25px;background:#696969;"></div>
<div style="left:423px;top:767px;width:90px;height:25px;background:#f0f0f0;"></div>
<div style="left:423px;top:767px;width:89px;height:1px;background:#ffffff;"></div>
<div style="left:423px;top:767px;width:1px;height:24px;background:#ffffff;"></div>
<div style="left:424px;top:790px;width:88px;height:1px;background:#a0a0a0;"></div>
<div style="left:511px;top:768px;width:1px;height:23px;background:#a0a0a0;"></div>
<div style="left:423px;top:791px;width:90px;height:1px;background:#696969;"></div>
<div style="left:512px;top:767px;width:1px;height:25px;background:#696969;"></div>
<div style="left:518px;top:767px;width:90px;height:25px;background:#f0f0f0;"></div>
<div style="left:518px;top:767px;width:89px;height:1px;background:#ffffff;"></div>
<div style="left:518px;top:767px;width:1px;height:24px;background:#ffffff;"></div>
<div style="left:519px;top:790px;width:88px;height:1px;background:#a0a0a0;"></div>
<div style="left:606px;top:768px;width:1px;height:23px;background:#a0a0a0;"></div>
<div style="left:518px;top:791px;width:90px;height:1px;background:#696969;"></div>
<div style="left:607px;top:767px;width:1px;height:25px;background:#696969;"></div>
<span class="t f12_5" style="left:49.20px;top:770.87px;transform:scaleX(0.8842);color:#a0a0a0;text-shadow:1px 1px 0 #fff;"><u>A</u>nvend</span>
<span class="t f12_5" style="left:144.01px;top:770.87px;transform:scaleX(0.8675);color:#a0a0a0;text-shadow:1px 1px 0 #fff;">Egenskaber</span>
<span class="t f12_5" style="left:254.42px;top:770.87px;transform:scaleX(0.8505);color:#a0a0a0;text-shadow:1px 1px 0 #fff;">Tilføje</span>
<span class="t f12_5" style="left:350.84px;top:770.87px;transform:scaleX(0.8260);color:#a0a0a0;text-shadow:1px 1px 0 #fff;">Fj<u>e</u>rn</span>
<span class="t f12_5" style="left:454.53px;top:770.87px;transform:scaleX(0.8394);"><u>A</u>fslut</span>
<span class="t f12_5" style="left:548.51px;top:770.87px;transform:scaleX(0.8690);">Hjælp</span>
</div>
<div class="g" id="statusbar">
<div style="left:1px;top:799px;width:921px;height:19px;background:#f0f0f0;"></div>
<span class="t f12" style="left:2.99px;top:801.63px;transform:scaleX(0.9376);">Klar</span>
<div style="left:508px;top:801px;width:161px;height:1px;background:#a0a0a0;"></div>
<div style="left:508px;top:801px;width:1px;height:17px;background:#a0a0a0;"></div>
<div style="left:508px;top:817px;width:161px;height:1px;background:#ffffff;"></div>
<div style="left:668px;top:801px;width:1px;height:17px;background:#ffffff;"></div>
<div style="left:671px;top:801px;width:82px;height:1px;background:#a0a0a0;"></div>
<div style="left:671px;top:801px;width:1px;height:17px;background:#a0a0a0;"></div>
<div style="left:671px;top:817px;width:82px;height:1px;background:#ffffff;"></div>
<div style="left:752px;top:801px;width:1px;height:17px;background:#ffffff;"></div>
<div style="left:755px;top:801px;width:25px;height:1px;background:#a0a0a0;"></div>
<div style="left:755px;top:801px;width:1px;height:17px;background:#a0a0a0;"></div>
<div style="left:755px;top:817px;width:25px;height:1px;background:#ffffff;"></div>
<div style="left:779px;top:801px;width:1px;height:17px;background:#ffffff;"></div>
<div style="left:782px;top:801px;width:42px;height:1px;background:#a0a0a0;"></div>
<div style="left:782px;top:801px;width:1px;height:17px;background:#a0a0a0;"></div>
<div style="left:782px;top:817px;width:42px;height:1px;background:#ffffff;"></div>
<div style="left:823px;top:801px;width:1px;height:17px;background:#ffffff;"></div>
<div style="left:826px;top:801px;width:20px;height:1px;background:#a0a0a0;"></div>
<div style="left:826px;top:801px;width:1px;height:17px;background:#a0a0a0;"></div>
<div style="left:826px;top:817px;width:20px;height:1px;background:#ffffff;"></div>
<div style="left:845px;top:801px;width:1px;height:17px;background:#ffffff;"></div>
<div style="left:848px;top:801px;width:34px;height:1px;background:#a0a0a0;"></div>
<div style="left:848px;top:801px;width:1px;height:17px;background:#a0a0a0;"></div>
<div style="left:848px;top:817px;width:34px;height:1px;background:#ffffff;"></div>
<div style="left:881px;top:801px;width:1px;height:17px;background:#ffffff;"></div>
<div style="left:884px;top:801px;width:19px;height:1px;background:#a0a0a0;"></div>
<div style="left:884px;top:801px;width:1px;height:17px;background:#a0a0a0;"></div>
<div style="left:884px;top:817px;width:19px;height:1px;background:#ffffff;"></div>
<div style="left:902px;top:801px;width:1px;height:17px;background:#ffffff;"></div>
<span class="t f12" style="left:509.99px;top:801.63px;transform:scaleX(0.9416);">DESKTOP-789HANE : COM(*)</span>
<span class="t f12" style="left:673.80px;top:801.63px;transform:scaleX(0.9333);">TCP-Port:6001</span>
<span class="t f12" style="left:784.34px;top:801.63px;transform:scaleX(1.0445);">Admin</span>
<span class="t f12" style="left:850.04px;top:801.63px;transform:scaleX(1.0286);">NUM</span>
<svg style="left:908px;top:804px" width="13" height="14" viewBox="0 0 13 14"><path d="M1.8 14L13 2.8M6 14L13 7M10 14L13 11" stroke="#a0a0a0" stroke-width="1.8" fill="none"/></svg>
</div>
<div class="g" id="frame">
<div style="left:0px;top:0px;width:923px;height:1px;background:#000;"></div>
<div style="left:0px;top:0px;width:1px;height:819px;background:#000;"></div>
<div style="left:922px;top:0px;width:1px;height:819px;background:#000;"></div>
<div style="left:0px;top:818px;width:923px;height:1px;background:#000;"></div>
</div>
</div></body></html>
